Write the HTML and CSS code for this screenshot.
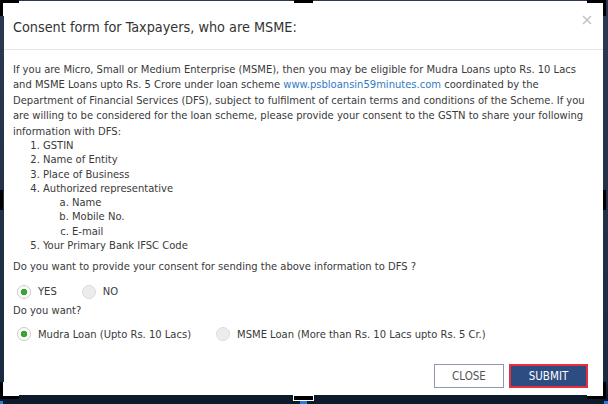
FILE: index.html
```html
<!DOCTYPE html>
<html lang="en">
<head>
    <meta charset="UTF-8">
    <meta name="viewport" content="width=device-width, initial-scale=1.0">
    <title>MSME Consent</title>
    <link rel="stylesheet" href="styles.css">
</head>
<body>
    <div class="modal">
        <div class="modal-header">
            <h4>Consent form for Taxpayers, who are MSME:</h4>
            <button class="close" type="button" aria-label="Close">
                <svg width="10" height="10" viewBox="0 0 10 10"><path d="M1 1L9 9M9 1L1 9"/></svg>
            </button>
        </div>
        <div class="modal-body">
            <p class="intro">If you are Micro, Small or Medium Enterprise (MSME), then you may be eligible for Mudra Loans upto Rs. 10 Lacs and MSME Loans upto Rs. 5 Crore under loan scheme <a href="#">www.psbloansin59minutes.com</a> coordinated by the Department of Financial Services (DFS), subject to fulfilment of certain terms and conditions of the Scheme. If you are willing to be considered for the loan scheme, please provide your consent to the GSTN to share your following information with DFS:</p>
            <ol class="info-list">
                <li>GSTIN</li>
                <li>Name of Entity</li>
                <li>Place of Business</li>
                <li>Authorized representative
                    <ol type="a">
                        <li>Name</li>
                        <li>Mobile No.</li>
                        <li>E-mail</li>
                    </ol>
                </li>
                <li>Your Primary Bank IFSC Code</li>
            </ol>
            <p class="question">Do you want to provide your consent for sending the above information to DFS ?</p>
            <div class="radio-row">
                <label class="radio"><input type="radio" name="consent" checked> YES</label>
                <label class="radio"><input type="radio" name="consent"> NO</label>
            </div>
            <p class="question small-gap">Do you want?</p>
            <div class="radio-row">
                <label class="radio"><input type="radio" name="loan" checked> Mudra Loan (Upto Rs. 10 Lacs)</label>
                <label class="radio"><input type="radio" name="loan"> MSME Loan (More than Rs. 10 Lacs upto Rs. 5 Cr.)</label>
            </div>
        </div>
        <div class="modal-footer">
            <button class="btn btn-close" type="button">CLOSE</button>
            <button class="btn btn-submit" type="button">SUBMIT</button>
        </div>
    </div>

    <!-- selection handles drawn over the screenshot -->
    <div class="handle tl"></div>
    <div class="handle tm"></div>
    <div class="handle tr"></div>
    <div class="handle ml"></div>
    <div class="handle mr"></div>
    <div class="handle bl"></div>
    <div class="handle bm"></div>
    <div class="handle br"></div>
    <div class="dot d-left"></div>
    <div class="dot d-mid"></div>
    <div class="dot d-right"></div>
</body>
</html>
```

FILE: styles.css
```css
body {
    margin: 0;
    padding: 1px 5px 0 4px;
    height: 404px;
    box-sizing: border-box;
    overflow: hidden;
    background: linear-gradient(to bottom, #2b3a50 0, #1a2a40 380px, #0c1a2b 395px);
    font-family: "DejaVu Sans Condensed", "DejaVu Sans", sans-serif;
    color: #3a3a3a;
    position: relative;
}
.modal {
    background: #fff;
    height: 394px;
    display: flex;
    flex-direction: column;
}
.modal-header {
    display: flex;
    justify-content: space-between;
    align-items: flex-start;
    padding: 17px 11px 13px 9px;
    border-bottom: 1px solid #e5e5e5;
}
.modal-header h4 {
    margin: 0;
    font-size: 14.3px;
    font-weight: normal;
    line-height: 18px;
    color: #333;
}
.close {
    background: none;
    border: none;
    padding: 0;
    margin-top: -3px;
    width: 10px;
    height: 10px;
    cursor: pointer;
}
.close svg {
    display: block;
    stroke: #c4c4c4;
    stroke-width: 1.6;
}
.modal-body {
    padding: 11.5px 10px 0 9px;
    font-size: 11.1px;
}
.modal-body p {
    margin: 0;
    line-height: 15.5px;
}
.modal-body a {
    color: #2f7bc4;
    text-decoration: none;
}
.info-list {
    margin: 0;
    padding-left: 30px;
    line-height: 14.3px;
}
.info-list ol {
    margin: 0;
    padding-left: 29px;
}
.question {
    margin-top: 6px !important;
}
.question.small-gap {
    margin-top: 1px !important;
}
.radio-row {
    display: flex;
    gap: 25px;
    height: 20px;
    align-items: center;
    margin: 7px 0 0 4px;
}
.radio-row + .question + .radio-row {
    margin-top: 6px;
}
.radio {
    display: flex;
    align-items: center;
    gap: 7px;
    cursor: pointer;
}
.radio input {
    appearance: none;
    margin: 0;
    width: 14px;
    height: 14px;
    border-radius: 50%;
    border: 1px solid #dcdcdc;
    background: #ececec;
}
.radio input:checked {
    background: radial-gradient(circle, #3aa534 0 3px, #fff 3.6px);
    border-color: #c9c9c9;
}
.modal-footer {
    display: flex;
    justify-content: flex-end;
    gap: 5px;
    margin-top: auto;
    padding: 0 15px 7px;
}
.btn {
    height: 24px;
    font-family: inherit;
    font-size: 11.5px;
    padding: 0;
    cursor: pointer;
}
.btn-close {
    width: 70px;
    background: #fff;
    color: #555;
    border: 1px solid #8e9aab;
}
.btn-submit {
    width: 79px;
    background: #2d4c81;
    color: #fff;
    border: 2px solid #e5313d;
}
.handle {
    position: absolute;
    border: 0 solid #000;
}
.tl { left: 0; top: 0; width: 16px; height: 13px; border-width: 3px 0 0 3px; box-shadow: inset 1px 1px 0 #fff; }
.tr { right: 2px; top: 0; width: 16px; height: 13px; border-width: 3px 3px 0 0; box-shadow: inset -1px 1px 0 #fff; }
.bl { left: 0; top: 382px; width: 16px; height: 14px; border-width: 0 0 3px 3px; box-shadow: inset 1px -1px 0 #fff; }
.br { right: 2px; top: 382px; width: 16px; height: 14px; border-width: 0 3px 3px 0; box-shadow: inset -1px -1px 0 #fff; }
.tm { left: 294px; top: 0; width: 19px; height: 0; border-top-width: 3px; }
.bm { left: 294px; top: 396px; width: 17px; height: 2px; border-width: 1px; background: #000; outline: 1px solid #fff; }
.ml { left: 0; top: 190px; width: 3px; height: 20px; background: #000; }
.mr { right: 2px; top: 190px; width: 3px; height: 20px; background: #000; }
.dot {
    position: absolute;
    top: 401px;
    height: 3px;
    background: #2a7be0;
}
.d-left { left: 0; width: 3px; }
.d-mid { left: 300px; width: 7px; }
.d-right { right: 0; width: 4px; }
```
